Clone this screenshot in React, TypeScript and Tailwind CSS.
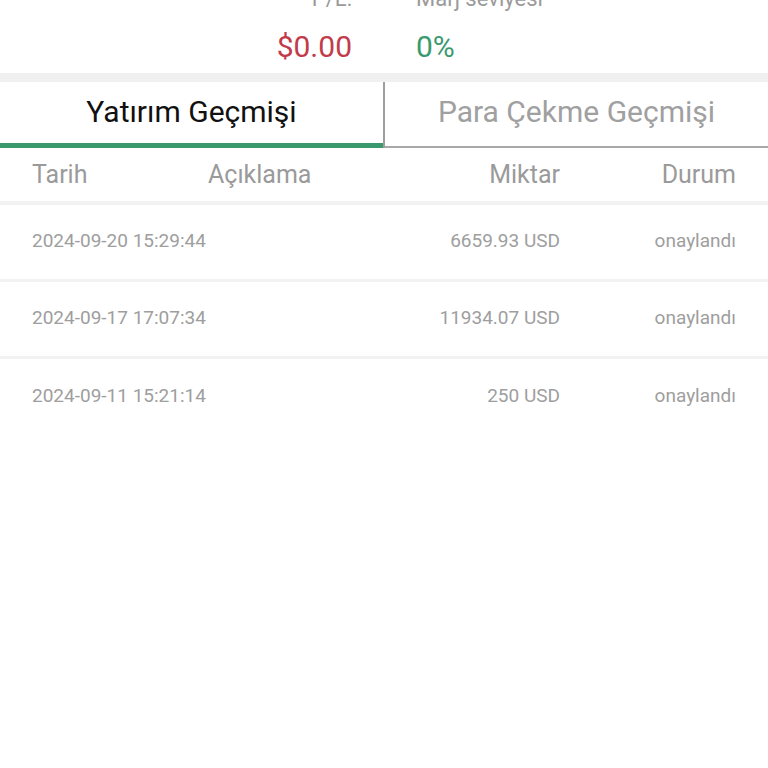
export default function App() {
  const rows = [
    { date: '2024-09-20 15:29:44', amount: '6659.93 USD', status: 'onaylandı' },
    { date: '2024-09-17 17:07:34', amount: '11934.07 USD', status: 'onaylandı' },
    { date: '2024-09-11 15:21:14', amount: '250 USD', status: 'onaylandı' },
  ];

  return (
    <div className="w-[768px] h-[768px] overflow-hidden bg-white font-['Roboto',sans-serif]">
      {/* Summary: P/L + margin level */}
      <div className="flex -mt-[14px] h-[87px]">
        <div className="w-1/2 pr-[32px] flex flex-col items-end">
          <div className="text-[22px] leading-[26px] text-[#9a9a9a]">P/L:</div>
          <div className="mt-[18px] text-[30px] leading-[34px] text-[#c23b4b]">$0.00</div>
        </div>
        <div className="w-1/2 pl-[32px] flex flex-col items-start">
          <div className="text-[22px] leading-[26px] text-[#9a9a9a]">Marj seviyesi</div>
          <div className="mt-[18px] text-[30px] leading-[34px] text-[#3a9a6e]">0%</div>
        </div>
      </div>
      <div className="h-[9px] bg-[#f0f0f0]" />

      {/* Tabs */}
      <div className="flex h-[66px]">
        <div className="w-[383px] flex items-center justify-center pb-[3px] border-b-[5px] border-[#3a9a6e] text-[30px] text-[#111]">
          Yatırım Geçmişi
        </div>
        <div className="w-[2px] bg-[#9e9e9e]" />
        <div className="flex-1 flex items-center justify-center pb-[6px] border-b-[2px] border-[#a8a8a8] text-[30px] text-[#a0a0a0]">
          Para Çekme Geçmişi
        </div>
      </div>

      {/* Table header */}
      <div className="flex items-center h-[57px] text-[25px] text-[#9a9a9a] border-b-[4px] border-[#f2f2f2]">
        <div className="w-[208px] pl-[32px]">Tarih</div>
        <div className="w-[176px]">Açıklama</div>
        <div className="w-[176px] text-right">Miktar</div>
        <div className="w-[176px] text-right">Durum</div>
      </div>

      {rows.map((r) => (
        <div
          key={r.date}
          className="flex items-center h-[77px] pb-[2px] text-[19px] text-[#9e9e9e] border-b-[3px] border-[#f2f2f2] last:border-b-0"
        >
          <div className="w-[384px] pl-[32px]">{r.date}</div>
          <div className="w-[176px] text-right">{r.amount}</div>
          <div className="w-[176px] text-right">{r.status}</div>
        </div>
      ))}
    </div>
  );
}
